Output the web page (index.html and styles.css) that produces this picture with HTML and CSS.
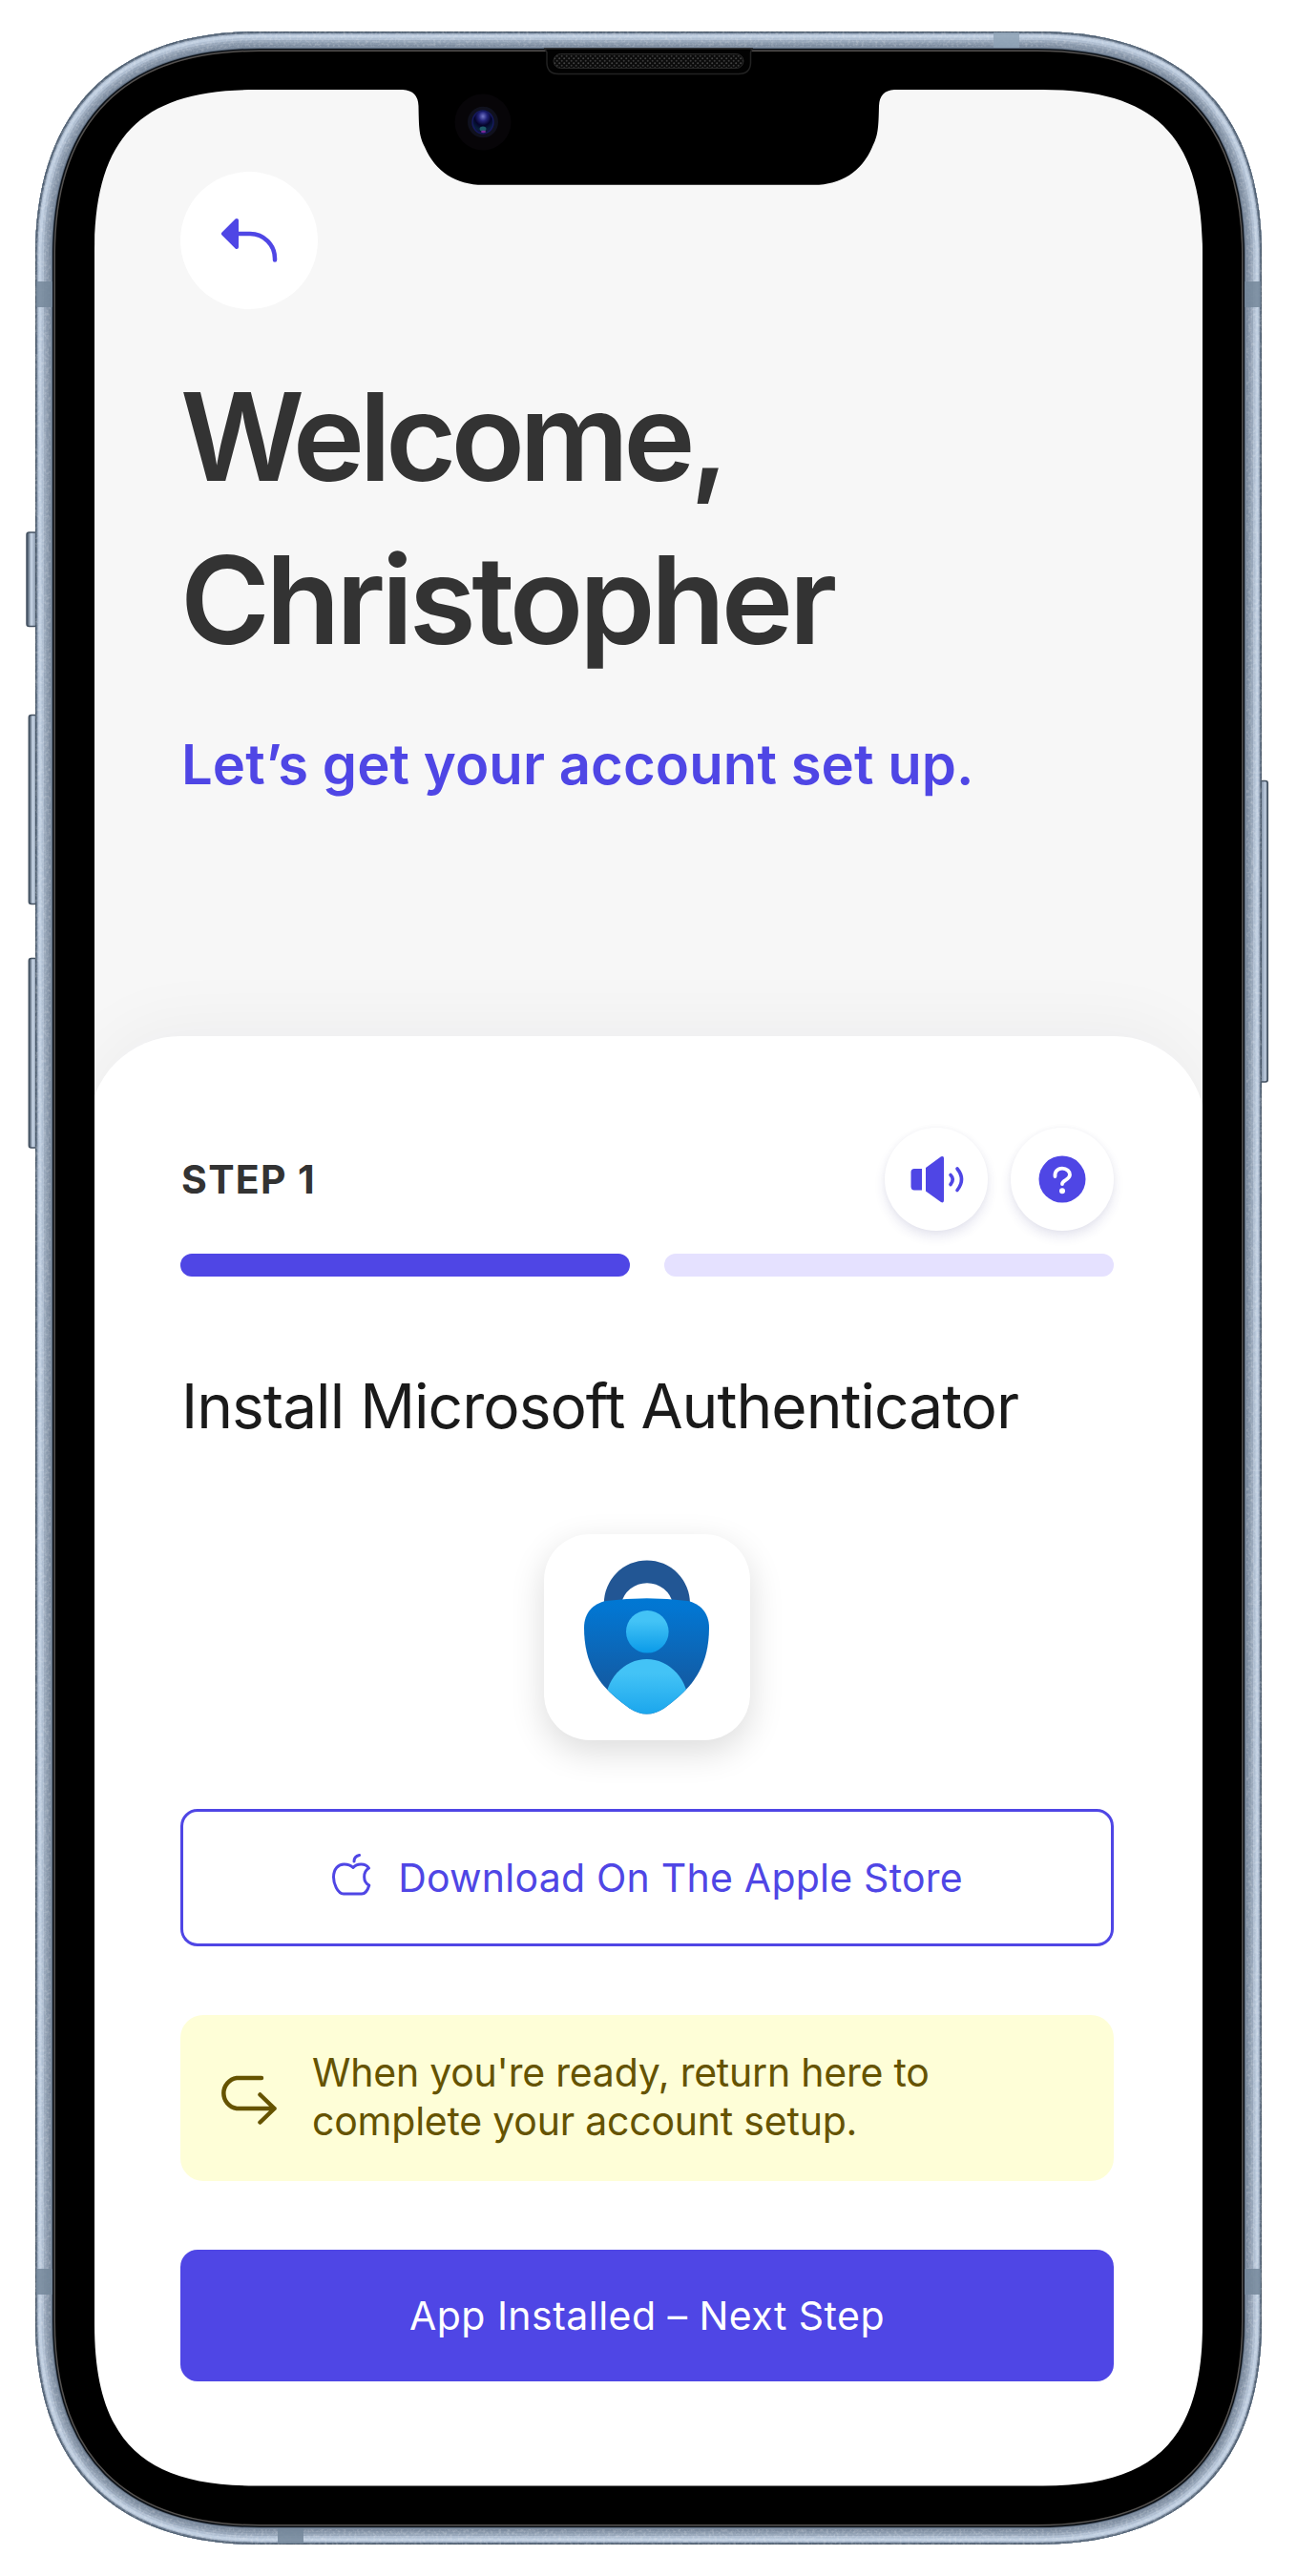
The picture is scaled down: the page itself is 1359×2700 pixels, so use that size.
FILE: index.html
```html
<!DOCTYPE html>
<html lang="en">
<head>
<meta charset="utf-8">
<title>Account setup</title>
<link rel="stylesheet" href="styles.css">
</head>
<body>
<div class="phone">
  <main class="screen">
    <header class="hero">
      <button class="back" aria-label="Back">
        <svg width="144" height="144" viewBox="0 0 144 144" fill="none">
          <path d="M45 65 L59 51 V79 Z" fill="#4f46e5" stroke="#4f46e5" stroke-width="4" stroke-linejoin="round"/>
          <path d="M59 65 H73 A26 26 0 0 1 99 91 V92.500" stroke="#4f46e5" stroke-width="4.500" stroke-linecap="round"/>
        </svg>
      </button>
      <h1 class="title"><span class="greeting">Welcome,</span><br><span class="name">Christopher</span></h1>
      <p class="subtitle">Let’s get your account set up.</p>
    </header>

    <section class="sheet">
      <div class="step-row">
        <span class="step">STEP 1</span>
        <div class="tools">
          <button class="tool" aria-label="Listen">
            <svg width="108" height="108" viewBox="0 0 108 108" fill="none">
              <path d="M39 43 H31 Q27.500 43 27.500 46.500 V61.500 Q27.500 65.500 31 65.500 H39 Z" fill="#4f46e5"/>
              <path d="M43 42 L59 30.300 Q62 29 62 32 V76 Q62 79.500 59 78 L43 66.500 Z" fill="#4f46e5"/>
              <path d="M69 49.500 Q73.500 54 69 59.500 M76 43 Q85 54 76 65.500" stroke="#4f46e5" stroke-width="3.600" stroke-linecap="round"/>
            </svg>
          </button>
          <button class="tool" aria-label="Help">
            <svg width="108" height="108" viewBox="0 0 108 108" fill="none">
              <circle cx="54" cy="54" r="24.500" fill="#4f46e5"/>
              <path d="M46.500 51 C46 46 49 42.700 54 42.700 C59 42.700 62 46 62 49.300 C62 55 54 54.500 54 59" stroke="#fff" stroke-width="3.800" stroke-linecap="round"/>
              <circle cx="54" cy="66.300" r="3" fill="#fff"/>
            </svg>
          </button>
        </div>
      </div>
      <div class="progress">
        <span class="bar done"></span>
        <span class="bar"></span>
      </div>
      <h2 class="task">Install Microsoft Authenticator</h2>
      <div class="app-icon">
        <svg width="216" height="216" viewBox="0 0 216 216">
          <defs>
            <linearGradient id="shield" x1="0" y1="0" x2="0" y2="1">
              <stop offset="0" stop-color="#0078d4"/><stop offset=".12" stop-color="#0375d0"/><stop offset=".8" stop-color="#1459a0"/><stop offset="1" stop-color="#1459a0"/>
            </linearGradient>
            <linearGradient id="head" x1="0" y1="0" x2="0" y2="1">
              <stop offset=".25" stop-color="#43c3f6"/><stop offset="1" stop-color="#0a9ae8"/>
            </linearGradient>
            <linearGradient id="torso" x1="0" y1="131" x2="0" y2="190" gradientUnits="userSpaceOnUse">
              <stop offset=".25" stop-color="#43c3f6"/><stop offset="1" stop-color="#1aa5ec"/>
            </linearGradient>
            <clipPath id="shieldClip"><path d="M42 98 C42 82 52 72.500 65 70 Q107.700 64.500 150.500 70 C163 72.500 173 82 173 98 C173 146 148 166 126 182.500 Q107.700 194.500 89.500 182.500 C67 166 42 146 42 98 Z"/></clipPath>
          </defs>
          <path d="M62.800 73 A45 45.500 0 0 1 153 73 H135 A27.500 27 0 0 0 81 73 Z" fill="#225694"/>
          <g clip-path="url(#shieldClip)">
            <rect x="42" y="66" width="131" height="124" fill="url(#shield)"/>
            <ellipse cx="107.700" cy="180" rx="44" ry="49" fill="url(#torso)"/>
          </g>
          <circle cx="108.300" cy="102.300" r="22.300" fill="url(#head)"/>
        </svg>
      </div>
      <button class="btn outline">
        <svg class="apple" width="44" height="46" viewBox="0 0 44 46" fill="none" stroke="#4f46e5" stroke-width="3" stroke-linecap="round" stroke-linejoin="round">
          <path d="M24 8 C24 4.500 26 2.200 29.500 1.500"/>
          <path d="M23 14.500 C27 9.800 36 9.800 39.500 15 C33 19 33 29.500 39.800 33 C38.500 37.500 36.500 42 32 42 H13 C6.500 42 2.500 31 2.500 24.500 C2.500 16 7.500 11 13.500 11 C17.500 11 20.500 12 23 14.500 Z"/>
        </svg>
        <span>Download On The Apple Store</span>
      </button>
      <div class="notice">
        <svg class="return" width="62" height="58" viewBox="0 0 62 58" fill="none" stroke="#655300" stroke-width="4.500" stroke-linecap="round" stroke-linejoin="round">
          <path d="M45 8 H19 A16.200 16.200 0 0 0 19 40 H58.500 M43.500 25.500 L58.500 40 L43.500 54.500"/>
        </svg>
        <p class="notice-text">When you're ready, return here to<br>complete your account setup.</p>
      </div>
      <button class="btn primary">App Installed – Next Step</button>
    </section>
  </main>

  <svg class="frame" width="1359" height="2700" viewBox="0 0 1359 2700" fill="none" aria-hidden="true">
    <defs>
      <path id="body" d="M272 33 H1087 C1240 33 1322 115 1322 268 V2432 C1322 2585 1240 2667 1087 2667 H272 C119 2667 37 2585 37 2432 V268 C37 115 119 33 272 33 Z"/>
      <clipPath id="bodyClip"><use href="#body"/></clipPath>
      <filter id="grain" x="0" y="0" width="1" height="1">
        <feTurbulence type="fractalNoise" baseFrequency=".35" numOctaves="2" seed="4"/>
        <feColorMatrix values="0 0 0 0 1  0 0 0 0 1  0 0 0 0 1  1.800 0 0 0 -.75"/>
        <feComposite in2="SourceGraphic" operator="in"/>
      </filter>
      <linearGradient id="key" x1="0" y1="0" x2="1" y2="0">
        <stop offset="0" stop-color="#465464"/><stop offset=".12" stop-color="#5d6c7d"/><stop offset=".4" stop-color="#c9d7e8"/><stop offset=".7" stop-color="#96a5b8"/><stop offset="1" stop-color="#8594a7"/>
      </linearGradient>
      <linearGradient id="keyRight" x1="0" y1="0" x2="1" y2="0">
        <stop offset="0" stop-color="#8190a3"/><stop offset=".4" stop-color="#94a4b8"/><stop offset=".75" stop-color="#c3d1e2"/><stop offset="1" stop-color="#566577"/>
      </linearGradient>
      <pattern id="mesh" width="5" height="5" patternUnits="userSpaceOnUse">
        <rect width="5" height="5" fill="#0b0b0b"/><circle cx="1.200" cy="1.200" r="1" fill="#444"/><circle cx="3.700" cy="3.700" r="1" fill="#3a3a3a"/>
      </pattern>
      <radialGradient id="lens" cx=".5" cy=".25" r=".8">
        <stop offset="0" stop-color="#7377c8"/><stop offset=".25" stop-color="#23247a"/><stop offset=".5" stop-color="#05042a"/><stop offset=".75" stop-color="#081f3c"/><stop offset="1" stop-color="#18063a"/>
      </radialGradient>
    </defs>
    <g stroke="#445261" stroke-width="1.500">
      <rect x="28" y="558" width="12" height="98.500" rx="2.500" fill="url(#key)"/>
      <rect x="30.300" y="749.500" width="10" height="198" rx="2.500" fill="url(#key)"/>
      <rect x="30.300" y="1004.500" width="10" height="198.500" rx="2.500" fill="url(#key)"/>
      <rect x="1319" y="818.500" width="9.300" height="315.500" rx="2.500" fill="url(#keyRight)"/>
    </g>
    <path fill="#000" fill-rule="evenodd" d="M272 45 H1087 C1232 45 1310 123 1310 268 V2432 C1310 2577 1232 2655 1087 2655 H272 C127 2655 49 2577 49 2432 V268 C49 123 127 45 272 45 Z
      M267 94 C148 94 99 143 99 264 V2436 C99 2556 148 2605.500 267 2605.500 H1093 C1211 2605.500 1260 2556 1260 2436 V264 C1260 143 1211 94 1093 94 H937 Q921.500 95 921 111 C920.500 135 920 142 914 154 C903 180 881 193.800 853 193.800 H506 C478 193.800 456 180 445 154 C439 142 439 135 438.500 111 Q438 95 422 94 Z"/>
    <g clip-path="url(#bodyClip)">
      <use href="#body" stroke="#54514f" stroke-width="42"/>
      <use href="#body" stroke="#0c1117" stroke-width="39"/>
      <use href="#body" stroke="#5f6e81" stroke-width="36"/>
      <use href="#body" stroke="#7e8da0" stroke-width="34"/>
      <use href="#body" stroke="#8998ab" stroke-width="28"/>
      <use href="#body" stroke="#98a7ba" stroke-width="23"/>
      <use href="#body" stroke="#afbed1" stroke-width="18"/>
      <use href="#body" stroke="#c0cfe1" stroke-width="13"/>
      <use href="#body" stroke="#a9b8cb" stroke-width="7"/>
      <use href="#body" stroke="#66768a" stroke-width="4.500"/>
      <use href="#body" stroke="#485767" stroke-width="2"/>
      <g opacity=".3"><use href="#body" stroke="#fff" stroke-width="32" filter="url(#grain)"/></g>
      <g fill="#74879a" fill-opacity=".85">
        <rect x="38" y="295" width="17" height="27"/><rect x="1304" y="295" width="17" height="27"/>
        <rect x="38" y="2378" width="17" height="27"/><rect x="1304" y="2378" width="17" height="27"/>
        <rect x="1041" y="34" width="27" height="16" fill="#8fa3b6"/><rect x="291" y="2650" width="27" height="16"/>
      </g>
    </g>
    <path d="M571 51 H788 L786.500 55 V66 Q786 77.500 774 77.500 H585 Q573.500 77.500 573 66 V55 Z" fill="#020202" stroke="#222" stroke-width="1.500"/>
    <rect x="580" y="56.500" width="199" height="15" rx="7.500" fill="url(#mesh)" stroke="#292929"/>
    <circle cx="506" cy="128" r="29.500" fill="#070508"/>
    <ellipse cx="506" cy="128" rx="16" ry="16.300" fill="#10111e"/>
    <ellipse cx="506" cy="128" rx="11" ry="12" fill="url(#lens)" stroke="#15195c" stroke-width="1.500"/>
    <ellipse cx="506" cy="135" rx="3.500" ry="2.500" fill="#1d5a68"/><ellipse cx="506.500" cy="138" rx="2.500" ry="1.200" fill="#7a2a9c"/>
  </svg>
</div>
</body>
</html>
```
FILE: styles.css
```css
* {
  box-sizing: border-box;
}

body {
  margin: 0;
  background: #fff;
  font-family: Inter, "Liberation Sans", sans-serif;
}

button {
  padding: 0;
  border: 0;
  font: inherit;
}

h1,
h2,
p {
  margin: 0;
  font-weight: inherit;
}

svg {
  display: block;
}

.phone {
  position: relative;
  width: 1359px;
  height: 2700px;
  padding: 84px 96px 84px 93px;
  overflow: hidden;
}

.frame {
  position: absolute;
  inset: 0;
  pointer-events: none;
}

.screen {
  display: flex;
  flex-direction: column;
  width: 1170px;
  height: 2532px;
  border-radius: 150px;
  overflow: hidden;
  background: #f7f7f7;
}

.hero {
  flex: none;
  height: 1002px;
  padding: 96px 96px 0;
}

.back {
  display: block;
  width: 144px;
  height: 144px;
  border-radius: 50%;
  background: #fff;
}

.title {
  margin-top: 48px;
  font-size: 127.5px;
  font-weight: 600;
  line-height: 171px;
  color: #333;
  white-space: nowrap;
}

.greeting {
  letter-spacing: -5.8px;
}

.name {
  letter-spacing: -4.4px;
}

.subtitle {
  margin-top: 48px;
  padding-left: 1px;
  font-size: 58px;
  font-weight: 600;
  letter-spacing: 0.08px;
  line-height: 78px;
  color: #4f46e5;
  white-space: nowrap;
}

.sheet {
  display: flex;
  flex: 1;
  flex-direction: column;
  padding: 96px 96px 0;
  border-radius: 96px 96px 0 0;
  background: #fff;
  box-shadow: 0 -12px 72px rgba(17, 24, 39, 0.045);
}

.step-row {
  display: flex;
  align-items: center;
  justify-content: space-between;
  height: 108px;
}

.step {
  padding-left: 1px;
  font-size: 41px;
  font-weight: 700;
  letter-spacing: 1.3px;
  line-height: 54px;
  color: #333;
}

.tools {
  display: flex;
  gap: 24px;
}

.tool {
  width: 108px;
  height: 108px;
  border-radius: 50%;
  background: #fff;
  box-shadow: 0 6px 12px rgba(49, 46, 129, 0.12), 0 0 6px rgba(0, 0, 0, 0.03);
}

.progress {
  display: flex;
  gap: 36px;
  margin-top: 24px;
}

.bar {
  flex: 1;
  height: 24px;
  border-radius: 12px;
  background: #e5e1ff;
}

.bar.done {
  background: #4f46e5;
}

.task {
  margin-top: 97px;
  padding-left: 1px;
  font-size: 64px;
  font-weight: 400;
  letter-spacing: -0.97px;
  line-height: 78px;
  color: #1a1a1a;
  white-space: nowrap;
}

.app-icon {
  align-self: center;
  width: 216px;
  height: 216px;
  margin-top: 95px;
  border-radius: 48px;
  background: #fff;
  box-shadow: 0 12px 36px rgba(0, 0, 0, 0.14);
}

.btn {
  display: flex;
  align-items: center;
  justify-content: center;
  border-radius: 18px;
  font-size: 41px;
  line-height: 54px;
  white-space: nowrap;
}

.outline {
  gap: 26px;
  height: 144px;
  margin-top: 72px;
  border: 3px solid #4f46e5;
  background: #fff;
  color: #4f46e5;
  letter-spacing: 0.23px;
}

.apple {
  margin-bottom: 4px;
}

.notice {
  display: flex;
  align-items: center;
  gap: 36px;
  height: 174px;
  margin-top: 72px;
  padding-left: 40px;
  border-radius: 24px;
  background: #fefed7;
  color: #655300;
}

.notice-text {
  margin-bottom: 3px;
  font-size: 41px;
  letter-spacing: -0.22px;
  line-height: 51px;
  white-space: nowrap;
}

.primary {
  height: 138px;
  margin-top: 72px;
  background: #4f46e5;
  color: #fff;
  letter-spacing: 0.47px;
}
```
